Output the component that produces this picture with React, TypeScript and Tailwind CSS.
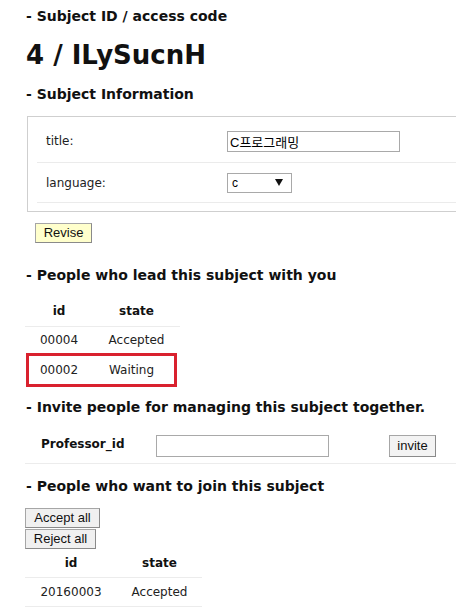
import React from "react";

const V = { fontFamily: '"DejaVu Sans", Verdana, sans-serif' };
const A = { fontFamily: '"Liberation Sans", Arial, sans-serif' };

function Heading({ children, className = "" }: { children: React.ReactNode; className?: string }) {
  return (
    <div className={"h-[32px] flex items-center pl-[1px] text-[14px] font-bold text-[#111] whitespace-nowrap " + className} style={V}>
      {children}
    </div>
  );
}

function Btn({ children, className = "" }: { children: React.ReactNode; className?: string }) {
  return (
    <div
      className={"h-[20px] flex items-center justify-center border border-[#a6a6a6] border-b-[#8a8a8a] border-r-[#8a8a8a] text-[13px] text-[#111] " + className}
      style={A}
    >
      {children}
    </div>
  );
}

export default function App() {
  return (
    <div className="w-[456px] h-[613px] overflow-hidden bg-white pl-[25px] text-[#222]" style={V}>
      <Heading className="pt-[1px]">- Subject ID / access code</Heading>
      <div className="h-[46px] flex items-center pl-[1px] text-[26px] font-bold text-[#111]" style={V}>
        4 / ILySucnH
      </div>
      <Heading>- Subject Information</Heading>

      <div className="mt-[6px] ml-[2px] w-[450px] border border-[#cfcfcf] pl-[9px] pb-[8px]">
        <div className="h-[46px] pt-[3px] flex items-center border-b border-[#ebebeb]">
          <div className="w-[190px] pl-[9px] text-[12px]">title:</div>
          <input
            readOnly
            defaultValue="C프로그래밍"
            className="w-[173px] h-[21px] border border-[#a9a9a9] px-[2px] text-[13px] text-black outline-none"
            style={{ fontFamily: '"Liberation Sans", Arial, "Noto Sans CJK KR", sans-serif' }}
          />
        </div>
        <div className="h-[40px] flex items-center border-b border-[#ebebeb]">
          <div className="w-[190px] pl-[9px] text-[12px]">language:</div>
          <div className="w-[65px] h-[20px] border border-[#a9a9a9] flex items-center justify-between pl-[4px] pr-[8px] text-[12px] text-black" style={A}>
            <span>c</span>
            <svg width="8" height="7" viewBox="0 0 8 7"><path d="M0 0 H8 L4 7 Z" fill="#111" /></svg>
          </div>
        </div>
      </div>

      <Btn className="mt-[11px] ml-[10px] w-[57px] bg-[#ffffcc]">Revise</Btn>

      <Heading className="mt-[16px]">- People who lead this subject with you</Heading>

      <div className="mt-[5px] w-[155px] text-[12px]">
        <div className="h-[31px] flex items-center border-b border-[#ececec] font-bold text-[#111]">
          <div className="w-[68px] text-center">id</div>
          <div className="w-[87px] text-center">state</div>
        </div>
        <div className="h-[26px] flex items-center">
          <div className="w-[68px] text-center">00004</div>
          <div className="w-[87px] text-center">Accepted</div>
        </div>
      </div>
      <div className="ml-[1px] w-[151px] h-[34px] border-[3px] border-[#d9212e] flex items-center text-[12px]">
        <div className="w-[60px] text-center">00002</div>
        <div className="w-[85px] text-center">Waiting</div>
      </div>

      <Heading className="mt-[4px]">- Invite people for managing this subject together.</Heading>

      <div className="h-[41px] pt-[2px] flex items-center border-b border-[#ececec] w-[440px]">
        <div className="w-[131px] pl-[16px] text-[12px] font-bold text-[#111]">Professor_id</div>
        <input readOnly className="w-[173px] h-[22px] mt-[3px] border border-[#a9a9a9] outline-none" />
        <Btn className="ml-[60px] mt-[3px] w-[47px] h-[22px] bg-[#f3f3f3]">invite</Btn>
      </div>

      <Heading className="mt-[6px]">- People who want to join this subject</Heading>

      <Btn className="mt-[6px] w-[75px] bg-[#f0f0f0]">Accept all</Btn>
      <Btn className="mt-[1px] w-[71px] bg-[#f0f0f0]">Reject all</Btn>

      <div className="w-[177px] text-[12px]">
        <div className="h-[29px] flex items-center border-b border-[#ececec] font-bold text-[#111]">
          <div className="w-[92px] text-center">id</div>
          <div className="w-[85px] text-center">state</div>
        </div>
        <div className="h-[29px] flex items-center border-b border-[#ececec]">
          <div className="w-[92px] text-center">20160003</div>
          <div className="w-[85px] text-center">Accepted</div>
        </div>
      </div>
    </div>
  );
}
